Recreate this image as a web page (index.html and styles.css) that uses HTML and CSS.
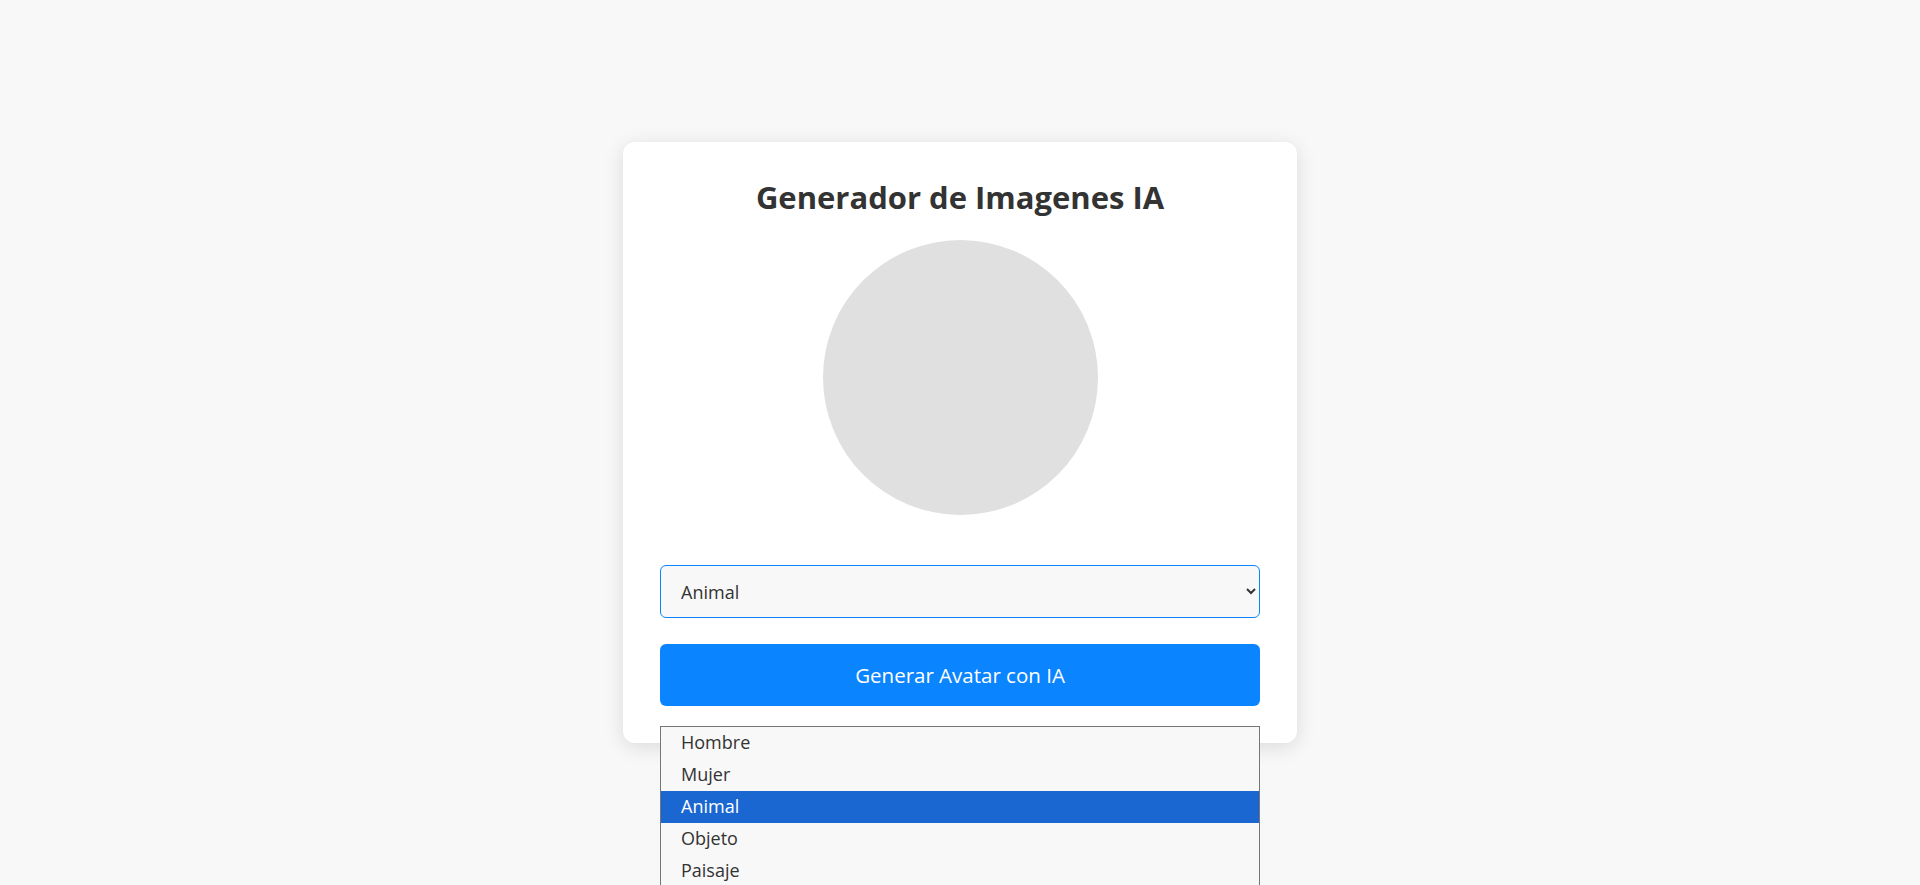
FILE: index.html
```html
<!DOCTYPE html>
<html lang="es">
<head>
<meta charset="utf-8">
<title>Generador de Imagenes IA</title>
<link rel="stylesheet" href="styles.css">
</head>
<body>
<main class="card">
  <h1 class="title">Generador de Imagenes IA</h1>
  <div class="avatar"></div>
  <div class="select-wrap">
    <select class="type-select">
      <option>Hombre</option>
      <option>Mujer</option>
      <option selected>Animal</option>
      <option>Objeto</option>
      <option>Paisaje</option>
    </select>
  </div>
  <div class="action">
    <button class="generate">Generar Avatar con IA</button>
    <ul class="dropdown">
      <li class="opt">Hombre</li>
      <li class="opt">Mujer</li>
      <li class="opt active">Animal</li>
      <li class="opt">Objeto</li>
      <li class="opt">Paisaje</li>
    </ul>
  </div>
</main>
</body>
</html>
```
FILE: styles.css
```css
* { box-sizing: border-box; }
html, body { height: 100%; }
body {
  margin: 0;
  background: #f8f8f8;
  font-family: "Open Sans", "Noto Sans", sans-serif;
  color: #333;
  display: flex;
  align-items: center;
  justify-content: center;
  overflow: hidden;
}
.card {
  width: 674px;
  padding: 37px;
  background: #fff;
  border-radius: 12px;
  box-shadow: 0 4px 20px rgba(0, 0, 0, 0.12);
  display: flex;
  flex-direction: column;
  align-items: center;
}
.title {
  margin: 0;
  font-size: 31px;
  font-weight: 700;
  line-height: 36px;
  color: #333;
}
.avatar {
  margin-top: 25px;
  width: 275px;
  height: 275px;
  border-radius: 50%;
  background: #e0e0e0;
}
.select-wrap {
  width: 100%;
  margin-top: 50px;
}
.type-select {
  width: 100%;
  height: 53px;
  padding: 0 16px;
  font-family: inherit;
  font-size: 18px;
  color: #333;
  background: #f8f8f8;
  border: 1px solid #0a84ff;
  border-radius: 6px;
  outline: none;
}
.action {
  width: 100%;
  margin-top: 26px;
  position: relative;
}
.generate {
  width: 100%;
  height: 62px;
  border: none;
  border-radius: 6px;
  background: #0a84ff;
  color: #fff;
  font-family: inherit;
  font-size: 20.5px;
}
.dropdown {
  position: absolute;
  left: 0;
  right: 0;
  top: 82px;
  margin: 0;
  padding: 0;
  list-style: none;
  background: #f8f8f8;
  border: 1px solid #767676;
  z-index: 2;
}
.opt {
  height: 32px;
  line-height: 31px;
  padding-left: 20px;
  font-size: 18px;
  color: #333;
}
.opt.active {
  background: #1a67d2;
  color: #fff;
}
```
